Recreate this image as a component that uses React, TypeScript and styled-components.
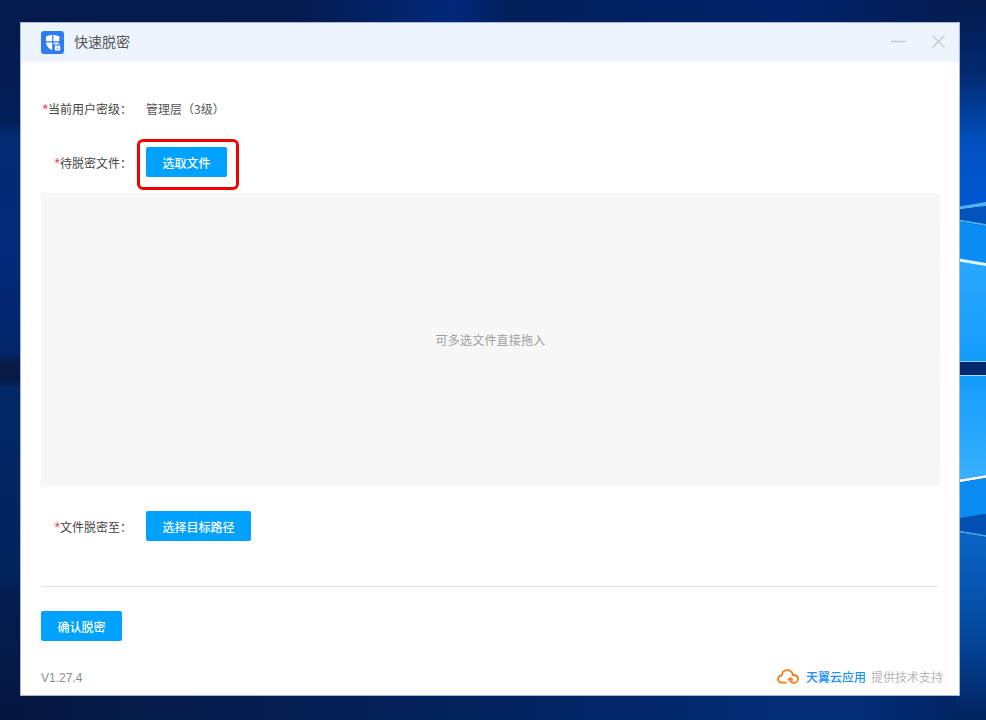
import React from "react";
import styled, { createGlobalStyle } from "styled-components";

const Global = createGlobalStyle`
  html, body { margin: 0; padding: 0; width: 986px; height: 720px; overflow: hidden; }
  body { font-family: "Noto Sans CJK SC", "Noto Sans", sans-serif; background: #04194a; }
`;

const Desktop = styled.div`
  position: relative;
  width: 986px;
  height: 720px;
  padding: 23px 27px 25px 21px;
  box-sizing: border-box;
  overflow: hidden;
`;

const WallpaperSvg = styled.svg`
  position: absolute;
  left: 0;
  top: 0;
`;

const Window = styled.div`
  position: relative;
  display: flex;
  flex-direction: column;
  height: 672px;
  background: #fff;
  box-shadow: 0 0 0 1px #a9b8d2;
`;

const TitleBar = styled.div`
  display: flex;
  align-items: center;
  height: 39px;
  flex: none;
  padding: 0 14px 0 20px;
  background: #eef4fe;
`;

const TitleText = styled.span`
  margin: 0 0 4px 10px;
  font-size: 14px;
  color: #555;
  flex: 1;
`;

const WinButtons = styled.div`
  display: flex;
  align-items: center;
  gap: 26px;
  margin-bottom: 2px;
`;

const Body = styled.div`
  display: flex;
  flex-direction: column;
  flex: 1;
  padding: 0 20px;
`;

const FormRow = styled.div<{ $top: number; $h: number }>`
  display: flex;
  align-items: center;
  height: ${(p) => p.$h}px;
  margin-top: ${(p) => p.$top}px;
`;

const Label = styled.div`
  width: 91px;
  flex: none;
  text-align: right;
  font-size: 12px;
  color: #444;
  white-space: nowrap;
  margin-right: 14px;
`;

const Star = styled.span`
  font-family: "Liberation Sans", sans-serif;
  font-size: 14px;
  line-height: 1;
  color: #f5333f;
`;

const Value = styled.div`
  font-size: 12px;
  color: #555;
`;

const Button = styled.button<{ $w: number }>`
  width: ${(p) => p.$w}px;
  height: 30px;
  padding: 0;
  border: none;
  border-radius: 2px;
  background: #00a2ff;
  color: #fff;
  font-family: inherit;
  font-size: 12px;
  font-weight: 500;
`;

const Highlight = styled.div`
  position: absolute;
  left: -9px;
  top: -8px;
  width: 102px;
  height: 51px;
  box-sizing: border-box;
  border: 3px solid #f00000;
  border-radius: 6px;
  pointer-events: none;
`;

const HighlightAnchor = styled.div`
  position: relative;
  display: flex;
`;

const DropZone = styled.div`
  display: flex;
  align-items: center;
  justify-content: center;
  width: 899px;
  height: 293px;
  margin-top: 16px;
  background: #f7f7f7;
  color: #9d9d9d;
  font-size: 12px;
  letter-spacing: 0.2px;
`;

const Divider = styled.div`
  height: 1px;
  width: 897px;
  margin-top: 45px;
  background: #e4e4e4;
`;

const Footer = styled.div`
  display: flex;
  align-items: center;
  justify-content: space-between;
  margin-top: 26px;
  margin-right: -4px;
  height: 18px;
`;

const Version = styled.span`
  font-family: "Liberation Sans", sans-serif;
  font-size: 12px;
  margin-top: 4px;
  color: #8c8c8c;
`;

const Credit = styled.div`
  display: flex;
  align-items: center;
  font-size: 12px;
`;

const Brand = styled.span`
  margin-left: 7px;
  color: #1a90ff;
  font-weight: 500;
`;

const Support = styled.span`
  margin-left: 5px;
  color: #b4b4b4;
`;

const Wallpaper = () => (
  <WallpaperSvg width="986" height="720" viewBox="0 0 986 720">
    <defs>
      <linearGradient id="left" x1="0" y1="0" x2="0" y2="1">
        <stop offset="0" stopColor="#041a4c" />
        <stop offset="0.17" stopColor="#031f58" />
        <stop offset="0.19" stopColor="#032a72" />
        <stop offset="0.35" stopColor="#03297a" />
        <stop offset="0.49" stopColor="#03256a" />
        <stop offset="0.505" stopColor="#081b45" />
        <stop offset="0.525" stopColor="#071a45" />
        <stop offset="0.54" stopColor="#032766" />
        <stop offset="0.8" stopColor="#03235e" />
        <stop offset="0.83" stopColor="#041c50" />
        <stop offset="1" stopColor="#05173f" />
      </linearGradient>
      <linearGradient id="topBand" x1="0" y1="0" x2="1" y2="0">
        <stop offset="0" stopColor="#041a4c" />
        <stop offset="0.3" stopColor="#041b50" />
        <stop offset="0.46" stopColor="#03287a" />
        <stop offset="0.52" stopColor="#021e5a" />
        <stop offset="0.8" stopColor="#02226a" />
        <stop offset="1" stopColor="#031a4c" />
      </linearGradient>
      <linearGradient id="bottomBand" x1="0" y1="0" x2="1" y2="0">
        <stop offset="0" stopColor="#05173f" />
        <stop offset="0.45" stopColor="#03225c" />
        <stop offset="0.85" stopColor="#022e78" />
        <stop offset="1" stopColor="#02225f" />
      </linearGradient>
      <linearGradient id="rightTop" x1="0" y1="0" x2="0" y2="1">
        <stop offset="0" stopColor="#031a4e" />
        <stop offset="0.35" stopColor="#02296e" />
        <stop offset="0.68" stopColor="#0050bf" />
        <stop offset="1" stopColor="#0058d4" />
      </linearGradient>
      <linearGradient id="rightBottom" x1="0" y1="0" x2="0" y2="1">
        <stop offset="0" stopColor="#0a66c8" />
        <stop offset="0.55" stopColor="#03479e" />
        <stop offset="1" stopColor="#02225f" />
      </linearGradient>
      <linearGradient id="pane" x1="0" y1="0" x2="0" y2="1">
        <stop offset="0" stopColor="#2aa8ff" />
        <stop offset="1" stopColor="#149cfc" />
      </linearGradient>
      <linearGradient id="pane2" x1="0" y1="0" x2="0" y2="1">
        <stop offset="0" stopColor="#149cfc" />
        <stop offset="1" stopColor="#38b0ff" />
      </linearGradient>
    </defs>
    <rect width="986" height="720" fill="#041c50" />
    <rect x="0" y="0" width="986" height="24" fill="url(#topBand)" />
    <rect x="0" y="694" width="986" height="26" fill="url(#bottomBand)" />
    <rect x="0" y="0" width="24" height="720" fill="url(#left)" />
    <rect x="956" y="0" width="30" height="207" fill="url(#rightTop)" />
    <polygon points="956,207 986,202 986,206 956,210" fill="#4fb0f0" />
    <polygon points="956,210 986,206 986,224 956,219" fill="#0353bd" />
    <polygon points="956,219 986,224 986,226 956,221" fill="#45b4f7" />
    <polygon points="956,221 986,226 986,264 956,259" fill="#0a8cf2" />
    <polygon points="956,259 986,264 986,362 956,362" fill="url(#pane)" />
    <polygon points="956,258 986,263 986,266 956,261" fill="#e4f5ff" />
    <rect x="956" y="362" width="30" height="13" fill="#032a6e" />
    <rect x="956" y="361" width="30" height="1" fill="#8cd0ff" />
    <rect x="956" y="375" width="30" height="1.5" fill="#a0d8ff" />
    <polygon points="956,376 986,376 986,475 956,480" fill="url(#pane2)" />
    <polygon points="956,480 986,475 986,478 956,483" fill="#eef8ff" />
    <polygon points="956,483 986,478 986,514 956,519" fill="#0a8cf2" />
    <polygon points="956,519 986,514 986,535 956,530" fill="#0350b4" />
    <polygon points="956,530 986,535 986,537 956,532" fill="#3ea6ee" />
    <polygon points="956,532 986,537 986,720 956,720" fill="url(#rightBottom)" />
  </WallpaperSvg>
);

const AppIcon = () => (
  <svg width="23" height="23" viewBox="0 0 23 23">
    <rect width="23" height="23" rx="3" fill="#2f7bf2" />
    <path d="M5 5.2 L11.2 3.8 V10.2 H5 Z" fill="#fff" />
    <path d="M12.4 3.8 L18.3 5.2 V10.2 H12.4 Z" fill="#fff" />
    <path d="M5 11.4 H11.2 V19 C8 18 5.6 15.4 5 11.4 Z" fill="#fff" />
    <path d="M12.4 11.4 H17 V13.4 H12.4 Z" fill="#cfe0fc" />
    <rect x="13.8" y="15" width="5.4" height="4.4" rx="0.6" fill="#fff" />
    <path d="M15 15 V13.6 A1.5 1.5 0 0 1 18 13.6 V15" fill="none" stroke="#fff" strokeWidth="0.9" />
    <circle cx="16.5" cy="17.2" r="0.8" fill="#2f7bf2" />
  </svg>
);

const MinIcon = () => (
  <svg width="15" height="15" viewBox="0 0 15 15">
    <path d="M0 7.5 H15" stroke="#c4c7cc" strokeWidth="1.4" />
  </svg>
);

const CloseIcon = () => (
  <svg width="13" height="13" viewBox="0 0 13 13">
    <path d="M0.5 0.5 L12.5 12.5 M12.5 0.5 L0.5 12.5" stroke="#c4c7cc" strokeWidth="1.3" />
  </svg>
);

const CloudIcon = () => (
  <svg width="22" height="15" viewBox="0 0 22 15" fill="none">
    <path
      d="M9 13.6 H5 C2.6 13.6 1 12 1 10 C1 8 2.6 6.5 4.6 6.5 C5.2 3.3 7.4 1.2 10.2 1.2 C13 1.2 15.2 3.2 15.8 6 C18.8 6 21 7.6 21 10 C21 12.2 19.2 13.8 17.2 13.8 C15 13.8 13.4 12.3 13.4 10.2"
      stroke="#f57c14"
      strokeWidth="1.8"
      strokeLinecap="round"
    />
    <path d="M11.2 11 L13.4 8.8 L15.6 11" stroke="#f57c14" strokeWidth="1.6" strokeLinecap="round" strokeLinejoin="round" />
  </svg>
);

export default function App() {
  return (
    <Desktop>
      <Global />
      <Wallpaper />
      <Window>
        <TitleBar>
          <AppIcon />
          <TitleText>快速脱密</TitleText>
          <WinButtons>
            <MinIcon />
            <CloseIcon />
          </WinButtons>
        </TitleBar>
        <Body>
          <FormRow $top={32} $h={28}>
            <Label><Star>*</Star>当前用户密级：</Label>
            <Value>管理层（3级）</Value>
          </FormRow>
          <FormRow $top={25} $h={30}>
            <Label><Star>*</Star>待脱密文件：</Label>
            <HighlightAnchor>
              <Button $w={81}>选取文件</Button>
              <Highlight />
            </HighlightAnchor>
          </FormRow>
          <DropZone>可多选文件直接拖入</DropZone>
          <FormRow $top={25} $h={30}>
            <Label><Star>*</Star>文件脱密至：</Label>
            <Button $w={105}>选择目标路径</Button>
          </FormRow>
          <Divider />
          <FormRow $top={24} $h={30}>
            <Button $w={81}>确认脱密</Button>
          </FormRow>
          <Footer>
            <Version>V1.27.4</Version>
            <Credit>
              <CloudIcon />
              <Brand>天翼云应用</Brand>
              <Support>提供技术支持</Support>
            </Credit>
          </Footer>
        </Body>
      </Window>
    </Desktop>
  );
}
